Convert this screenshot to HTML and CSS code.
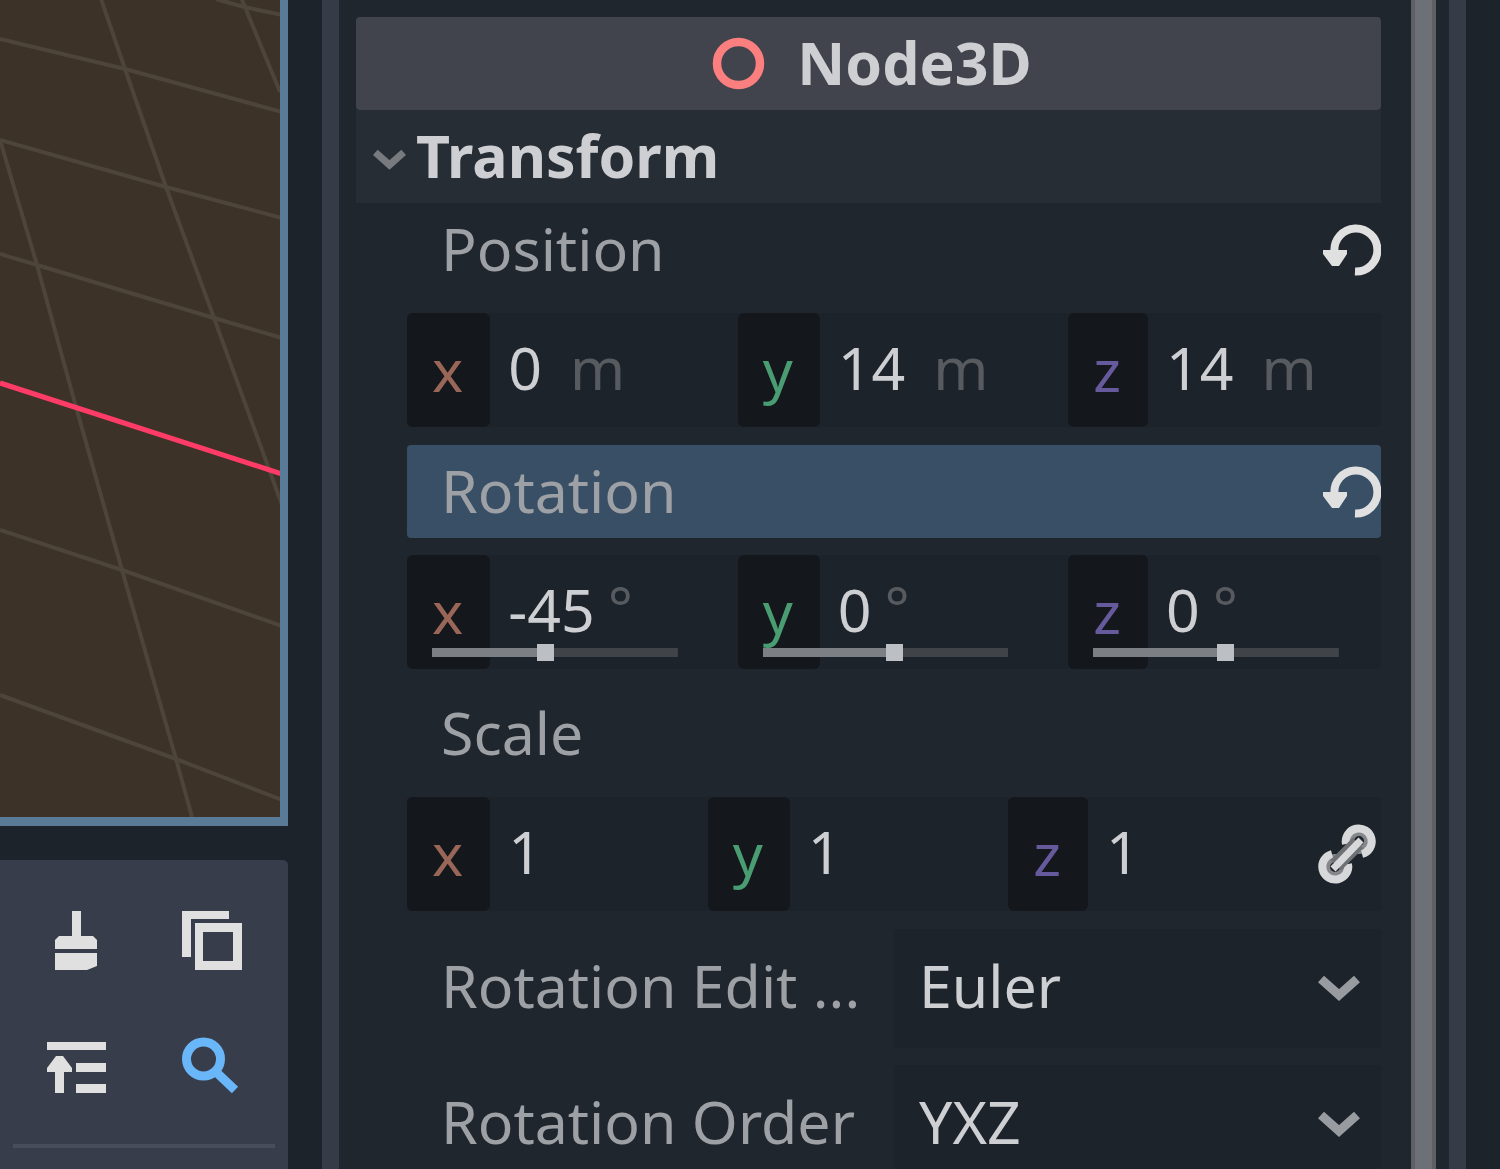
FILE: index.html
```html
<!DOCTYPE html>
<html lang="en">
<head>
<meta charset="utf-8">
<title>Inspector - Node3D</title>
<link rel="stylesheet" href="styles.css">
</head>
<body>
<svg width="0" height="0" class="sprites" aria-hidden="true">
  <symbol id="reset" viewBox="0 0 60 52">
    <path d="M34 47.500A21.500 21.500 0 1 0 13.500 28" fill="none" stroke="#e0e0e0" stroke-width="8"/>
    <path d="M2 26H26V30L18 42H11L2 30Z" fill="#e0e0e0"/>
  </symbol>
  <symbol id="chevron" viewBox="0 0 42 26">
    <path d="M3 4L21 20L39 4" fill="none" stroke="currentColor" stroke-width="9"/>
  </symbol>
</svg>
<div class="editor">
  <div class="workspace">
    <main class="viewport">
      <svg class="scene" viewBox="0 0 280 818" preserveAspectRatio="xMaxYMax slice" role="img" aria-label="3D view">
        <g fill="none" stroke="#4d443a" stroke-width="4">
          <path d="M216 0L244 8L282 16"/>
          <path d="M0 40L125 70L282 113"/>
          <path d="M0 141L166 188L282 219"/>
          <path d="M0 255L37 266L214 319L282 339"/>
          <path d="M0 531L122 571L282 627"/>
          <path d="M0 696L176 760L282 801"/>
          <path d="M240 -4L280 93"/>
          <path d="M99 -6L125 70L166 188L214 319L266 462L282 506"/>
          <path d="M0 141L37 266L76 408L122 571L176 760L192 818"/>
        </g>
        <path d="M0 384L282 475" stroke="#ff3b68" stroke-width="5"/>
      </svg>
    </main>
    <section class="tools">
      <div class="tool-grid">
        <button type="button" aria-label="Clear">
          <svg viewBox="0 0 67 67"><path d="M29 4H38V29H50L54 33V42H12V33L16 29H29ZM12 46H54V59L44 63H12Z" fill="#e0e0e0"/></svg>
        </button>
        <button type="button" aria-label="Duplicate">
          <svg viewBox="0 0 67 67"><path d="M4 4H51V12H13V50H4ZM17 16H64V63H17ZM25 25V54H55V25Z" fill="#e0e0e0" fill-rule="evenodd"/></svg>
        </button>
        <button type="button" aria-label="Move up">
          <svg viewBox="0 0 67 67"><path d="M4 8H63V16H4ZM33 29H63V38H33ZM33 50H63V59H33ZM12 59V38H4V34L13 22H20L29 34V38H21V59Z" fill="#e0e0e0"/></svg>
        </button>
        <button type="button" aria-label="Search">
          <svg viewBox="0 0 67 67" fill="none" stroke="#69b6f9" stroke-width="9"><circle cx="25.500" cy="25" r="17"/><path d="M37 37L57 56"/></svg>
        </button>
      </div>
      <hr>
    </section>
  </div>
  <div class="divider"></div>
  <aside class="inspector">
    <h1 class="class-title">
      <svg viewBox="0 0 67 67"><circle cx="33.500" cy="33.500" r="21.500" fill="none" stroke="#fc7f7f" stroke-width="8.500"/></svg>
      <span>Node3D</span>
    </h1>
    <h2 class="category">
      <svg><use href="#chevron"/></svg>
      <span>Transform</span>
    </h2>
    <div class="properties">
      <section class="property">
        <div class="property-head"><span>Position</span><button type="button" aria-label="Reset position"><svg><use href="#reset"/></svg></button></div>
        <div class="vector">
          <label class="axis"><span class="tag x">x</span><input type="text" value="0"><span class="unit">m</span></label>
          <label class="axis"><span class="tag y">y</span><input type="text" value="14"><span class="unit">m</span></label>
          <label class="axis"><span class="tag z">z</span><input type="text" value="14"><span class="unit">m</span></label>
        </div>
      </section>
      <section class="property">
        <div class="property-head selected"><span>Rotation</span><button type="button" aria-label="Reset rotation"><svg><use href="#reset"/></svg></button></div>
        <div class="vector">
          <div class="axis"><label class="tag x" for="rx">x</label><input id="rx" type="text" value="-45"><span class="unit degree">°</span><input type="range" aria-label="Rotation x" value="46" style="--fill:46%"></div>
          <div class="axis"><label class="tag y" for="ry">y</label><input id="ry" type="text" value="0"><span class="unit degree">°</span><input type="range" aria-label="Rotation y" value="54" style="--fill:54%"></div>
          <div class="axis"><label class="tag z" for="rz">z</label><input id="rz" type="text" value="0"><span class="unit degree">°</span><input type="range" aria-label="Rotation z" value="54" style="--fill:54%"></div>
        </div>
      </section>
      <section class="property">
        <div class="property-head"><span>Scale</span></div>
        <div class="linked">
          <div class="vector">
            <label class="axis"><span class="tag x">x</span><input type="text" value="1"></label>
            <label class="axis"><span class="tag y">y</span><input type="text" value="1"></label>
            <label class="axis"><span class="tag z">z</span><input type="text" value="1"></label>
          </div>
          <button type="button" class="link" aria-label="Link scale">
            <svg viewBox="0 0 60 62" fill="none">
              <g stroke="#85888b" stroke-width="8"><circle cx="42" cy="18" r="9"/><circle cx="18" cy="44" r="9"/></g>
              <path d="M29 21A13 13 0 1 1 45 31M31 41A13 13 0 1 1 15 31" stroke="#d6d8d9" stroke-width="8"/>
              <path d="M19 42L41 20" stroke="#6d7074" stroke-width="15"/>
              <path d="M16 46L44 17" stroke="#d6d8d9" stroke-width="7"/>
            </svg>
          </button>
        </div>
      </section>
      <section class="choices">
        <label for="mode">Rotation Edit ...</label>
        <div class="choice"><select id="mode"><option>Euler</option></select><svg><use href="#chevron"/></svg></div>
        <label for="order">Rotation Order</label>
        <div class="choice"><select id="order"><option>YXZ</option></select><svg><use href="#chevron"/></svg></div>
      </section>
    </div>
  </aside>
  <div class="scrollbar"></div>
  <div class="divider"></div>
  <div class="edge"></div>
</div>
</body>
</html>
```

FILE: styles.css
```css
* { box-sizing: border-box; }
body {
  margin: 0;
  background: #1d232b;
  color: #cdcfd2;
  font: 59px/80px "Noto Sans", sans-serif;
}
.sprites { position: absolute; }
svg { display: block; flex: none; }
button { padding: 0; border: 0; background: none; }
input, select { font: inherit; color: inherit; border: 0; padding: 0; background: none; outline: 0; }

.editor { display: flex; height: 100vh; overflow: hidden; }
.workspace { display: flex; flex-direction: column; gap: 34px; flex: none; width: 288px; margin-right: 34px; }
.viewport {
  flex: 1;
  min-height: 0;
  background: #3d3227;
  border: solid #5a7b98;
  border-width: 0 8px 9px 0;
}
.scene { width: 100%; height: 100%; }
.tools { flex: none; padding: 47px 13px 21px; background: #373d4a; border-top-right-radius: 5px; }
.tool-grid { display: grid; grid-template-columns: 67px 67px; gap: 60px 68px; padding-left: 30px; }
.tool-grid svg { width: 67px; height: 67px; }
.tools hr { margin: 43px 0 0; border: 0; height: 4px; background: #484d5b; }
.divider { flex: none; width: 17px; background: #353c48; }
.scrollbar { flex: none; width: 25px; margin-right: 13px; background: #6d7077; border: solid #5e6063; border-width: 0 4px; }
.edge { flex: none; width: 34px; }

.inspector { flex: 1; min-width: 0; padding: 17px 30px 0 17px; background: #20262d; }
.editor > .scrollbar { box-shadow: 13px 0 #20262d; }
.class-title, .category { display: flex; align-items: center; height: 93px; margin: 0; font-size: 59px; font-weight: 700; }
.class-title span, .category span, .property-head span { padding-bottom: 4px; }
.class-title { justify-content: center; gap: 25px; background: #41444c; border-radius: 4px; }
.class-title svg { width: 67px; height: 67px; }
.category { gap: 10px; padding-left: 17px; background: #272d34; }
.category svg { width: 33px; height: 21px; margin-top: 6px; color: #777b7f; }

.properties { display: flex; flex-direction: column; gap: 18px; padding-left: 51px; }
.property { display: flex; flex-direction: column; gap: 17px; }
.property-head { display: flex; align-items: center; justify-content: space-between; height: 93px; padding-left: 34px; color: #9da0a4; border-radius: 4px; }
.property-head.selected { background: #394f66; }
.property-head svg { width: 60px; height: 52px; }
.vector { display: grid; grid-template-columns: repeat(3, 1fr); gap: 18px; flex: 1; min-width: 0; background: #1d232a; border-radius: 4px; }
.axis { position: relative; display: flex; align-items: center; height: 114px; min-width: 0; }
.tag { align-self: stretch; margin-right: 18px; padding: 16px 27px 0 25px; background: #14171c; border-radius: 6px; }
.x { color: #996657; }
.y { color: #4a9c72; }
.z { color: #675a9c; }
.axis input[type="text"] { field-sizing: content; height: 80px; margin-bottom: 6px; }
.unit { margin: 0 0 6px 28px; color: #575b60; }
.degree { margin: 0 0 12px 13px; }
.axis input[type="range"] {
  position: absolute;
  left: 25px;
  right: 42px;
  bottom: 8px;
  height: 17px;
  margin: 0;
  appearance: none;
  background: linear-gradient(90deg, #7c8084 var(--fill), #404449 var(--fill)) center / 100% 9px no-repeat;
}
.axis input[type="range"]::-webkit-slider-thumb { appearance: none; width: 17px; height: 17px; background: #bcbfc4; }
.linked { display: flex; background: #1d232a; }
.link { flex: none; display: flex; align-items: center; justify-content: flex-end; width: 90px; padding-right: 4px; }
.link svg { width: 60px; height: 62px; }

.choices { display: grid; grid-template-columns: 1fr 1fr; align-items: center; gap: 17px 0; }
.choices label { padding: 0 0 7px 34px; color: #9da0a4; white-space: nowrap; }
.choice { position: relative; height: 119px; background: #1d232a; border-radius: 4px; }
.choice select { width: 100%; height: 100%; padding: 0 0 7px 25px; appearance: none; }
.choice svg { position: absolute; right: 21px; top: 46px; width: 42px; height: 26px; color: #989ca0; pointer-events: none; }
```
